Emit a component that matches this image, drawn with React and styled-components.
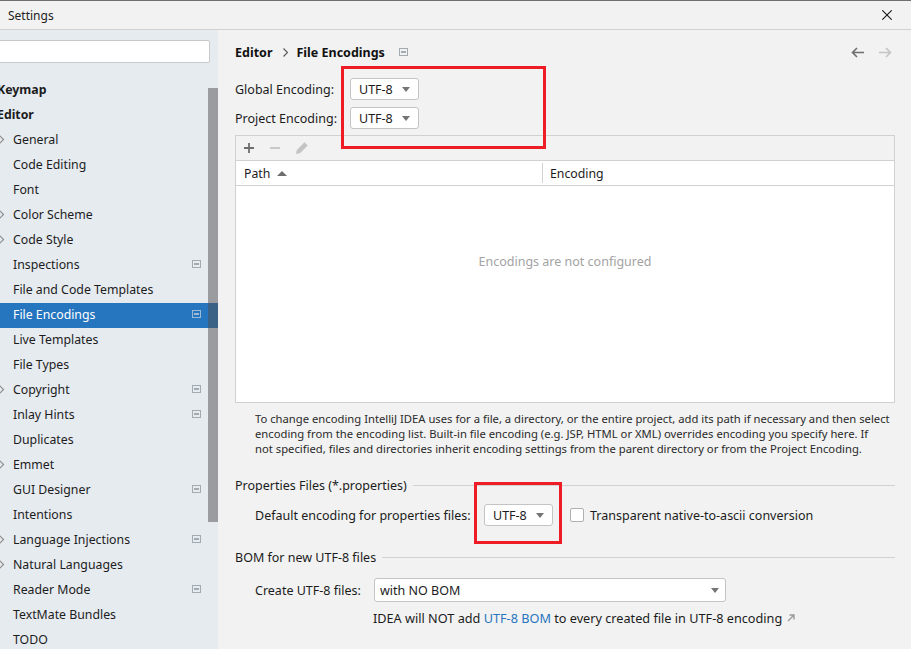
import React from "react";
import styled, { createGlobalStyle } from "styled-components";

const Global = createGlobalStyle`
  html, body {
    margin: 0;
    padding: 0;
    height: 100%;
    overflow: hidden;
    background: #f2f2f2;
    font-family: "Noto Sans", "Open Sans", sans-serif;
    font-size: 12.5px;
    color: #1c1c1c;
  }
`;

const Page = styled.div`
  position: relative;
  width: 911px;
  height: 649px;
  overflow: hidden;
  display: flex;
  flex-direction: column;
  background: #f2f2f2;
`;

const TitleBar = styled.div`
  height: 28px;
  flex: none;
  border-top: 1px solid #6f6f6f;
  border-bottom: 1px solid #d1d1d1;
  display: flex;
  align-items: center;
  justify-content: space-between;
  padding: 0 19px 0 8px;
`;

const Title = styled.span`
  font-size: 12px;
  color: #222;
`;

const Body = styled.div`
  flex: 1;
  display: flex;
  min-height: 0;
`;

const Sidebar = styled.aside`
  position: relative;
  width: 218px;
  flex: none;
  background: #e6ebf0;
  overflow: hidden;
  padding-top: 10px;
  font-size: 12.3px;
`;

const Search = styled.div`
  height: 21px;
  margin: 0 8px 0 -4px;
  background: #fff;
  border: 1px solid #c9c9c9;
  border-radius: 2px;
`;

const Tree = styled.div`
  margin-top: 15px;
`;

const Row = styled.div`
  position: relative;
  box-sizing: border-box;
  height: 25px;
  display: flex;
  align-items: center;
  padding: 0 0 2px ${(p) => (p.$top ? "0" : "13px")};
  font-weight: ${(p) => (p.$top ? 700 : 400)};
  color: ${(p) => (p.$active ? "#fff" : "#1c1c1c")};
  background: ${(p) => (p.$active ? "#2675bf" : "transparent")};
`;

const TopLabel = styled.span`
  margin-left: -3px;
  font-size: 12.3px;
  white-space: nowrap;
`;

const Chevron = styled.svg`
  position: absolute;
  left: -2px;
  top: 7px;
`;

const RowBadge = styled.svg`
  position: absolute;
  left: 192px;
  top: 7px;
`;

const Scrollbar = styled.div`
  position: absolute;
  left: 208px;
  top: 58px;
  width: 10px;
  height: 434px;
  background: rgba(77, 77, 77, 0.5);
`;

const Content = styled.main`
  flex: 1;
  min-width: 0;
  padding: 0 16px 0 17px;
`;

const Header = styled.div`
  height: 44px;
  display: flex;
  align-items: center;
  font-weight: 700;
  color: #111;
`;

const Sep = styled.svg`
  margin: 0 8px 0 11px;
`;

const HeaderBadge = styled.svg`
  margin-left: 14px;
`;

const Nav = styled.div`
  margin-left: auto;
  margin-right: 3px;
  display: flex;
  gap: 13px;
`;

const EncodingRow = styled.div`
  height: 29px;
  display: flex;
  align-items: center;
`;

const EncodingLabel = styled.span`
  width: 115px;
  flex: none;
  padding-top: 1px;
`;

const Combo = styled.div`
  box-sizing: border-box;
  width: ${(p) => p.$width || 69}px;
  height: ${(p) => p.$height || 22}px;
  flex: none;
  display: flex;
  align-items: center;
  justify-content: space-between;
  padding: ${(p) => p.$pad || "1px 8px 0"};
  background: #fff;
  border: 1px solid #c4c4c4;
  border-radius: 3px;
  color: #1c1c1c;
`;

const Arrow = styled.i`
  width: 0;
  height: 0;
  border-left: 4.5px solid transparent;
  border-right: 4.5px solid transparent;
  border-top: 5px solid #757575;
`;

const TableBox = styled.div`
  box-sizing: border-box;
  height: 268px;
  margin-top: 3px;
  border: 1px solid #d1d1d1;
  background: #fff;
  display: flex;
  flex-direction: column;
`;

const Toolbar = styled.div`
  height: 24px;
  flex: none;
  background: #f2f2f2;
  border-bottom: 1px solid #d1d1d1;
  display: flex;
  align-items: center;
  padding-left: 7px;
  gap: 14px;
`;

const TableHead = styled.div`
  height: 24px;
  flex: none;
  border-bottom: 1px solid #d1d1d1;
  display: flex;
  align-items: stretch;
  font-size: 12.3px;
`;

const PathCol = styled.div`
  box-sizing: border-box;
  width: 307px;
  padding-left: 8px;
  display: flex;
  align-items: center;
  gap: 7px;
  position: relative;
  &::after {
    content: "";
    position: absolute;
    right: 0;
    top: 2px;
    bottom: 2px;
    width: 1px;
    background: #d1d1d1;
  }
`;

const SortUp = styled.i`
  width: 0;
  height: 0;
  border-left: 5px solid transparent;
  border-right: 5px solid transparent;
  border-bottom: 5px solid #6e6e6e;
`;

const EncodingCol = styled.div`
  display: flex;
  align-items: center;
  padding-left: 7px;
`;

const Empty = styled.div`
  flex: 1;
  text-align: center;
  padding-top: 67px;
  color: #a3a3a3;
  line-height: 18px;
`;

const Help = styled.p`
  margin: 8px 0 0 20px;
  font-size: 11.25px;
  line-height: 15px;
  color: #2a2a2a;
  white-space: nowrap;
`;

const GroupTitle = styled.div`
  display: flex;
  align-items: center;
  gap: 6px;
  height: 18px;
  margin-top: ${(p) => p.$top}px;
  &::after {
    content: "";
    flex: 1;
    height: 1px;
    background: #d1d1d1;
  }
`;

const FormRow = styled.div`
  display: flex;
  align-items: center;
  margin: ${(p) => p.$top}px 0 0 20px;
  height: ${(p) => p.$height || 22}px;
`;

const FormLabel = styled.span`
  width: ${(p) => p.$width}px;
  flex: none;
`;

const Check = styled.span`
  box-sizing: border-box;
  width: 14px;
  height: 14px;
  margin: 0 6px 0 17px;
  background: #fff;
  border: 1px solid #b0b0b0;
  border-radius: 2px;
`;

const Note = styled.div`
  margin: 7px 0 0 138px;
  display: flex;
  align-items: center;
  height: 18px;
  font-size: 12.7px;
  white-space: pre;
`;

const Link = styled.span`
  color: #2675bf;
`;

const External = styled.svg`
  margin-left: 5px;
`;

const RedBox = styled.div`
  position: absolute;
  box-sizing: border-box;
  left: ${(p) => p.$x}px;
  top: ${(p) => p.$y}px;
  width: ${(p) => p.$w}px;
  height: ${(p) => p.$h}px;
  border: 3px solid #ee1c25;
`;

const BadgeIcon = ({ as: Comp, color = "#a3abb1" }) => (
  <Comp width="9" height="8" viewBox="0 0 9 8">
    <rect x="0.5" y="0.5" width="8" height="7" fill="none" stroke={color} />
    <rect x="2" y="3" width="5" height="2" fill={color} />
  </Comp>
);

const items = [
  { label: "General", arrow: true },
  { label: "Code Editing" },
  { label: "Font" },
  { label: "Color Scheme", arrow: true },
  { label: "Code Style", arrow: true },
  { label: "Inspections", badge: true },
  { label: "File and Code Templates" },
  { label: "File Encodings", badge: true, active: true },
  { label: "Live Templates" },
  { label: "File Types" },
  { label: "Copyright", arrow: true, badge: true },
  { label: "Inlay Hints", badge: true },
  { label: "Duplicates" },
  { label: "Emmet", arrow: true },
  { label: "GUI Designer", badge: true },
  { label: "Intentions" },
  { label: "Language Injections", arrow: true, badge: true },
  { label: "Natural Languages", arrow: true },
  { label: "Reader Mode", badge: true },
  { label: "TextMate Bundles" },
  { label: "TODO" },
];

const App = () => (
  <Page>
    <Global />
    <TitleBar>
      <Title>Settings</Title>
      <svg width="10" height="10" viewBox="0 0 10 10">
        <path d="M0.3 0.3 L9.7 9.7 M9.7 0.3 L0.3 9.7" stroke="#1a1a1a" strokeWidth="1.1" />
      </svg>
    </TitleBar>
    <Body>
      <Sidebar>
        <Search />
        <Tree>
          <Row $top><TopLabel>Keymap</TopLabel></Row>
          <Row $top><TopLabel>Editor</TopLabel></Row>
          {items.map((item) => (
            <Row key={item.label} $active={item.active}>
              {item.arrow && (
                <Chevron width="7" height="9" viewBox="0 0 7 9">
                  <path d="M1.5 0.5 L5.5 4.5 L1.5 8.5" fill="none" stroke="#8c8c8c" strokeWidth="1.2" />
                </Chevron>
              )}
              {item.label}
              {item.badge && <BadgeIcon as={RowBadge} color={item.active ? "#9db9d6" : undefined} />}
            </Row>
          ))}
        </Tree>
        <Scrollbar />
      </Sidebar>
      <Content>
        <Header>
          Editor
          <Sep width="5" height="9" viewBox="0 0 5 9">
            <path d="M0.5 0.5 L4.5 4.5 L0.5 8.5" fill="none" stroke="#555" strokeWidth="1.1" />
          </Sep>
          File Encodings
          <BadgeIcon as={HeaderBadge} />
          <Nav>
            <svg width="14" height="11" viewBox="0 0 14 11">
              <path d="M13 5.5 H2 M6 1 L1.5 5.5 L6 10" fill="none" stroke="#6e6e6e" strokeWidth="1.6" />
            </svg>
            <svg width="14" height="11" viewBox="0 0 14 11">
              <path d="M1 5.5 H12 M8 1 L12.5 5.5 L8 10" fill="none" stroke="#c4c4c4" strokeWidth="1.6" />
            </svg>
          </Nav>
        </Header>
        <EncodingRow>
          <EncodingLabel>Global Encoding:</EncodingLabel>
          <Combo>UTF-8<Arrow /></Combo>
        </EncodingRow>
        <EncodingRow>
          <EncodingLabel>Project Encoding:</EncodingLabel>
          <Combo>UTF-8<Arrow /></Combo>
        </EncodingRow>
        <TableBox>
          <Toolbar>
            <svg width="12" height="12" viewBox="0 0 12 12">
              <path d="M6 1 V11 M1 6 H11" stroke="#6e6e6e" strokeWidth="1.8" />
            </svg>
            <svg width="12" height="12" viewBox="0 0 12 12">
              <path d="M1 6 H11" stroke="#c4c4c4" strokeWidth="1.8" />
            </svg>
            <svg width="14" height="14" viewBox="0 0 14 14">
              <path d="M1 13 L1.8 9 L9.5 1.3 L12.7 4.5 L5 12.2 Z" fill="#c4c4c4" />
            </svg>
          </Toolbar>
          <TableHead>
            <PathCol>Path<SortUp /></PathCol>
            <EncodingCol>Encoding</EncodingCol>
          </TableHead>
          <Empty>Encodings are not configured</Empty>
        </TableBox>
        <Help>
          To change encoding IntelliJ IDEA uses for a file, a directory, or the entire project, add its path if necessary and then select
          <br />
          encoding from the encoding list. Built-in file encoding (e.g. JSP, HTML or XML) overrides encoding you specify here. If
          <br />
          not specified, files and directories inherit encoding settings from the parent directory or from the Project Encoding.
        </Help>
        <GroupTitle $top={20}>Properties Files (*.properties)</GroupTitle>
        <FormRow $top={10}>
          <FormLabel $width={229}>Default encoding for properties files:</FormLabel>
          <Combo>UTF-8<Arrow /></Combo>
          <Check />
          Transparent native-to-ascii conversion
        </FormRow>
        <GroupTitle $top={22}>BOM for new UTF-8 files</GroupTitle>
        <FormRow $top={12} $height={24}>
          <FormLabel $width={119}>Create UTF-8 files:</FormLabel>
          <Combo $width={352} $height={24} $pad="0 6px 0 5px">with NO BOM<Arrow /></Combo>
        </FormRow>
        <Note>
          IDEA will NOT add <Link>UTF-8 BOM</Link> to every created file in UTF-8 encoding
          <External width="8" height="8" viewBox="0 0 8 8">
            <path d="M1 7 L6.5 1.5 M2.5 1 H7 V5.5" fill="none" stroke="#9a9a9a" strokeWidth="1.4" />
          </External>
        </Note>
      </Content>
    </Body>
    <RedBox $x={341} $y={66} $w={205} $h={83} />
    <RedBox $x={474} $y={482} $w={88} $h={62} />
  </Page>
);

export default App;
